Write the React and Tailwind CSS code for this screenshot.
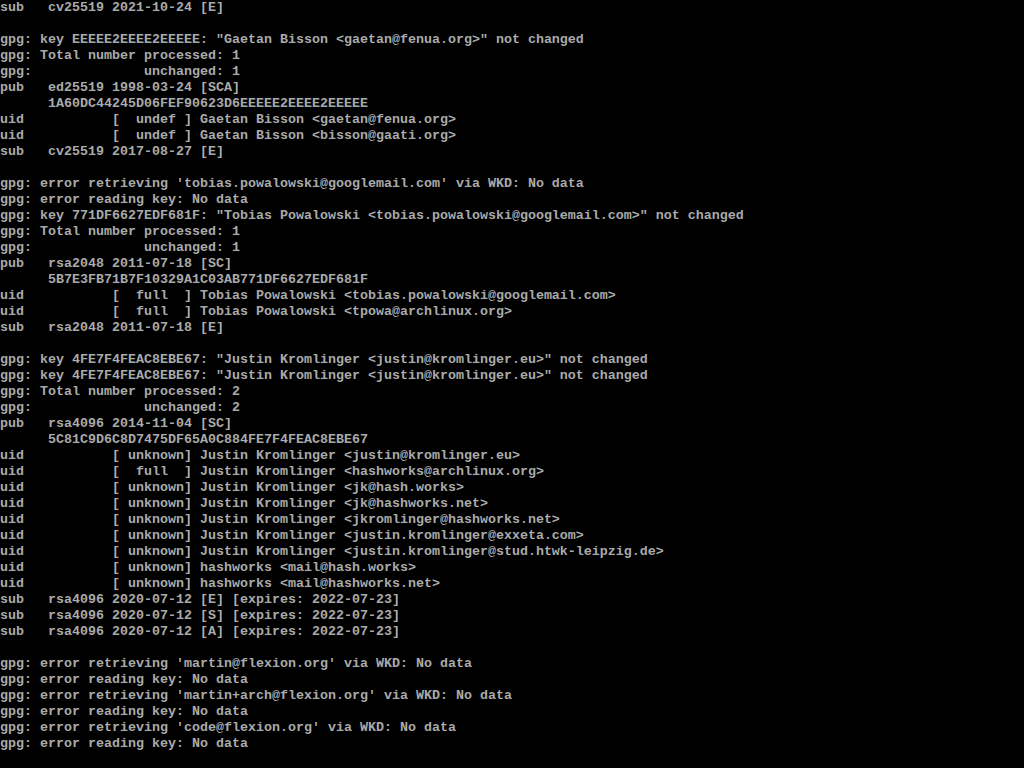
const lines = [
  "sub   cv25519 2021-10-24 [E]",
  "",
  'gpg: key EEEEE2EEEE2EEEEE: "Gaetan Bisson <gaetan@fenua.org>" not changed',
  "gpg: Total number processed: 1",
  "gpg:              unchanged: 1",
  "pub   ed25519 1998-03-24 [SCA]",
  "      1A60DC44245D06FEF90623D6EEEEE2EEEE2EEEEE",
  "uid           [  undef ] Gaetan Bisson <gaetan@fenua.org>",
  "uid           [  undef ] Gaetan Bisson <bisson@gaati.org>",
  "sub   cv25519 2017-08-27 [E]",
  "",
  "gpg: error retrieving 'tobias.powalowski@googlemail.com' via WKD: No data",
  "gpg: error reading key: No data",
  'gpg: key 771DF6627EDF681F: "Tobias Powalowski <tobias.powalowski@googlemail.com>" not changed',
  "gpg: Total number processed: 1",
  "gpg:              unchanged: 1",
  "pub   rsa2048 2011-07-18 [SC]",
  "      5B7E3FB71B7F10329A1C03AB771DF6627EDF681F",
  "uid           [  full  ] Tobias Powalowski <tobias.powalowski@googlemail.com>",
  "uid           [  full  ] Tobias Powalowski <tpowa@archlinux.org>",
  "sub   rsa2048 2011-07-18 [E]",
  "",
  'gpg: key 4FE7F4FEAC8EBE67: "Justin Kromlinger <justin@kromlinger.eu>" not changed',
  'gpg: key 4FE7F4FEAC8EBE67: "Justin Kromlinger <justin@kromlinger.eu>" not changed',
  "gpg: Total number processed: 2",
  "gpg:              unchanged: 2",
  "pub   rsa4096 2014-11-04 [SC]",
  "      5C81C9D6C8D7475DF65A0C884FE7F4FEAC8EBE67",
  "uid           [ unknown] Justin Kromlinger <justin@kromlinger.eu>",
  "uid           [  full  ] Justin Kromlinger <hashworks@archlinux.org>",
  "uid           [ unknown] Justin Kromlinger <jk@hash.works>",
  "uid           [ unknown] Justin Kromlinger <jk@hashworks.net>",
  "uid           [ unknown] Justin Kromlinger <jkromlinger@hashworks.net>",
  "uid           [ unknown] Justin Kromlinger <justin.kromlinger@exxeta.com>",
  "uid           [ unknown] Justin Kromlinger <justin.kromlinger@stud.htwk-leipzig.de>",
  "uid           [ unknown] hashworks <mail@hash.works>",
  "uid           [ unknown] hashworks <mail@hashworks.net>",
  "sub   rsa4096 2020-07-12 [E] [expires: 2022-07-23]",
  "sub   rsa4096 2020-07-12 [S] [expires: 2022-07-23]",
  "sub   rsa4096 2020-07-12 [A] [expires: 2022-07-23]",
  "",
  "gpg: error retrieving 'martin@flexion.org' via WKD: No data",
  "gpg: error reading key: No data",
  "gpg: error retrieving 'martin+arch@flexion.org' via WKD: No data",
  "gpg: error reading key: No data",
  "gpg: error retrieving 'code@flexion.org' via WKD: No data",
  "gpg: error reading key: No data",
  "",
];

export default function App() {
  return (
    <div className="w-[1024px] h-[768px] bg-black overflow-hidden flex flex-col text-[#aaaaaa] font-['Liberation_Mono',monospace] text-[13.3333px] font-bold">
      {lines.map((l, i) => (
        <div key={i} className="h-4 leading-4 whitespace-pre">
          {l}
        </div>
      ))}
    </div>
  );
}
